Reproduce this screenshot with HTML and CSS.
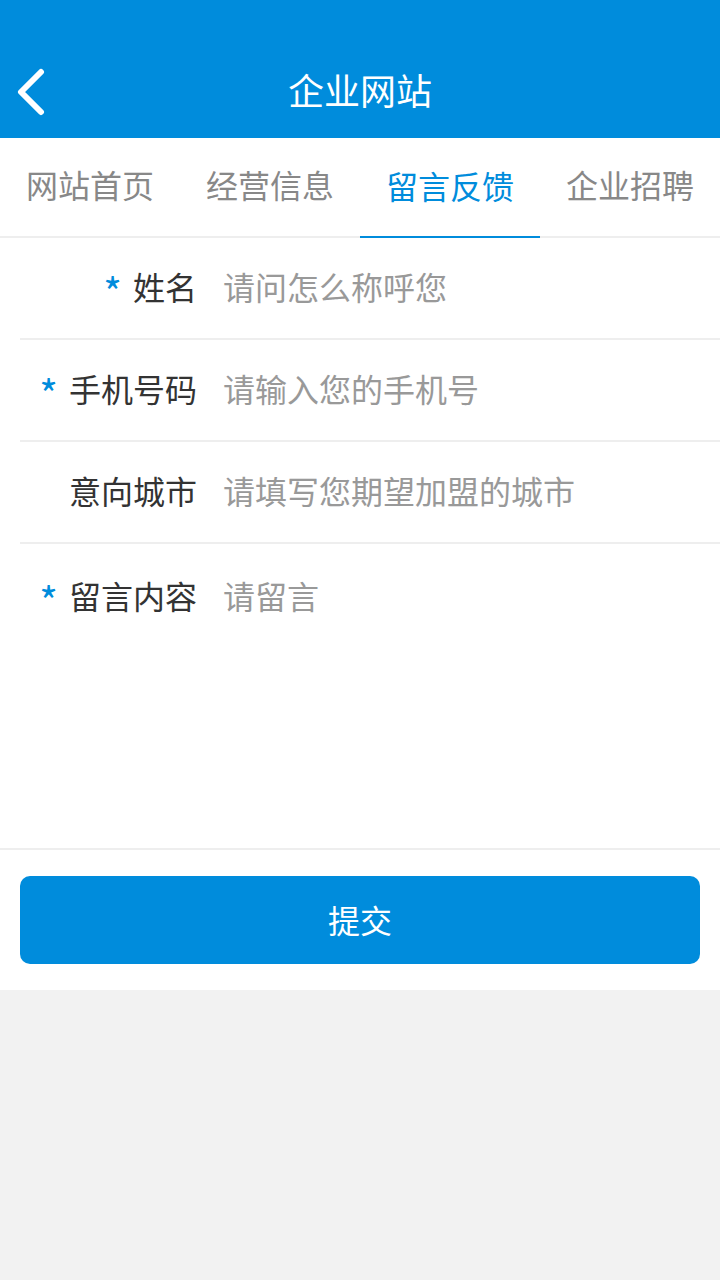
FILE: index.html
```html
<!DOCTYPE html>
<html lang="zh-CN">
<head>
    <meta charset="UTF-8">
    <meta name="viewport" content="width=device-width, initial-scale=1.0">
    <title>企业网站</title>
    <link rel="stylesheet" href="styles.css">
</head>
<body>

<div class="header">
    <div class="navbar">
        <a class="back" href="#">
            <svg width="32" height="50" viewBox="0 0 32 50">
                <polyline points="24,4 4,24 24,44" fill="none" stroke="#fff" stroke-width="6" stroke-linecap="round" stroke-linejoin="round"/>
            </svg>
        </a>
        <h1>企业网站</h1>
    </div>
</div>

<div class="tabs">
    <a class="tab" href="#">网站首页</a>
    <a class="tab" href="#">经营信息</a>
    <a class="tab active" href="#">留言反馈</a>
    <a class="tab" href="#">企业招聘</a>
</div>

<form class="form">
    <div class="row">
        <label class="label" for="name"><span class="req">*</span>姓名</label>
        <input type="text" id="name" placeholder="请问怎么称呼您">
    </div>
    <div class="row">
        <label class="label" for="phone"><span class="req">*</span>手机号码</label>
        <input type="text" id="phone" placeholder="请输入您的手机号">
    </div>
    <div class="row">
        <label class="label" for="city">意向城市</label>
        <input type="text" id="city" placeholder="请填写您期望加盟的城市">
    </div>
    <div class="row row-text">
        <label class="label" for="message"><span class="req">*</span>留言内容</label>
        <textarea id="message" placeholder="请留言"></textarea>
    </div>
    <div class="actions">
        <button type="button">提交</button>
    </div>
</form>

</body>
</html>
```

FILE: styles.css
```css
body {
    font-family: "Noto Sans CJK SC", "Noto Sans", sans-serif;
    margin: 0;
    padding: 0;
    background-color: #f2f2f2;
}
.header {
    background-color: #008cdc;
    padding-top: 46px;
}
.navbar {
    height: 92px;
    display: flex;
    align-items: center;
    justify-content: center;
    position: relative;
    box-sizing: border-box;
    padding-bottom: 6px;
}
.back {
    position: absolute;
    left: 17px;
    top: 22px;
    display: flex;
}
.navbar h1 {
    margin: 0;
    color: #fff;
    font-size: 36px;
    font-weight: normal;
}
.tabs {
    display: flex;
    background-color: #fff;
    border-bottom: 2px solid #eee;
}
.tab {
    flex: 1;
    height: 98px;
    display: flex;
    align-items: center;
    justify-content: center;
    font-size: 32px;
    color: #888;
    text-decoration: none;
    box-sizing: border-box;
    padding-bottom: 6px;
}
.tab.active {
    color: #008cdc;
    border-bottom: 2px solid #008cdc;
    margin-bottom: -2px;
    height: 100px;
    padding-bottom: 4px;
}
.form {
    background-color: #fff;
    margin: 0;
}
.row {
    display: flex;
    align-items: center;
    height: 100px;
    margin-left: 20px;
    border-bottom: 2px solid #eee;
}
.label {
    width: 177px;
    text-align: right;
    font-size: 32px;
    color: #333;
    flex-shrink: 0;
    margin-bottom: 4px;
}
.req {
    color: #008cdc;
    font-size: 40px;
    line-height: 20px;
    margin-right: 11px;
    position: relative;
    top: 8px;
}
input[type="text"], textarea {
    flex: 1;
    margin-left: 26px;
    margin-bottom: 4px;
    border: none;
    outline: none;
    padding: 0;
    font-family: inherit;
    font-size: 32px;
    color: #333;
    background: transparent;
}
input::placeholder, textarea::placeholder {
    color: #999;
}
.row-text {
    height: 304px;
    align-items: flex-start;
    margin-left: 0;
    padding-left: 20px;
}
.row-text .label {
    margin-top: 32px;
    line-height: 38px;
}
.row-text textarea {
    margin-top: 32px;
    line-height: 38px;
    height: 240px;
    resize: none;
}
.actions {
    padding: 26px 20px;
}
button {
    width: 100%;
    height: 88px;
    border: none;
    border-radius: 10px;
    background-color: #008cdc;
    color: #fff;
    font-family: inherit;
    font-size: 32px;
    cursor: pointer;
    padding-bottom: 4px;
}
```
